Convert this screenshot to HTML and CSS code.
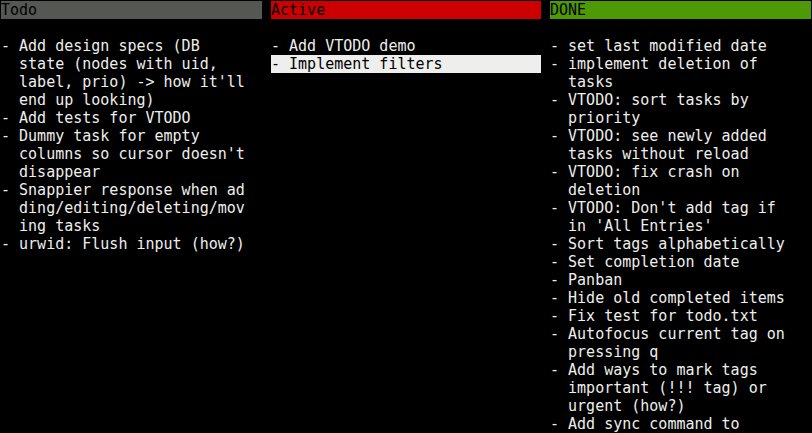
FILE: index.html
```html
<!DOCTYPE html>
<html>
<head>
<meta charset="utf-8">
<link rel="stylesheet" href="styles.css">
</head>
<body>
<div class="board">
  <section class="col">
    <div class="head head-todo">Todo</div>
    <div class="line"> </div>
    <div class="line">- Add design specs (DB</div>
    <div class="line">  state (nodes with uid,</div>
    <div class="line">  label, prio) -&gt; how it'll</div>
    <div class="line">  end up looking)</div>
    <div class="line">- Add tests for VTODO</div>
    <div class="line">- Dummy task for empty</div>
    <div class="line">  columns so cursor doesn't</div>
    <div class="line">  disappear</div>
    <div class="line">- Snappier response when ad</div>
    <div class="line">  ding/editing/deleting/mov</div>
    <div class="line">  ing tasks</div>
    <div class="line">- urwid: Flush input (how?)</div>
  </section>
  <div class="gap"></div>
  <section class="col">
    <div class="head head-active">Active</div>
    <div class="line"> </div>
    <div class="line">- Add VTODO demo</div>
    <div class="line focus">- Implement filters</div>
  </section>
  <div class="gap"></div>
  <section class="col">
    <div class="head head-done">DONE</div>
    <div class="line"> </div>
    <div class="line">- set last modified date</div>
    <div class="line">- implement deletion of</div>
    <div class="line">  tasks</div>
    <div class="line">- VTODO: sort tasks by</div>
    <div class="line">  priority</div>
    <div class="line">- VTODO: see newly added</div>
    <div class="line">  tasks without reload</div>
    <div class="line">- VTODO: fix crash on</div>
    <div class="line">  deletion</div>
    <div class="line">- VTODO: Don't add tag if</div>
    <div class="line">  in 'All Entries'</div>
    <div class="line">- Sort tags alphabetically</div>
    <div class="line">- Set completion date</div>
    <div class="line">- Panban</div>
    <div class="line">- Hide old completed items</div>
    <div class="line">- Fix test for todo.txt</div>
    <div class="line">- Autofocus current tag on</div>
    <div class="line">  pressing q</div>
    <div class="line">- Add ways to mark tags</div>
    <div class="line">  important (!!! tag) or</div>
    <div class="line">  urgent (how?)</div>
    <div class="line">- Add sync command to</div>
  </section>
</div>
</body>
</html>
```
FILE: styles.css
```css
html, body {
  margin: 0;
  padding: 0;
  background: #000;
  width: 812px;
  height: 433px;
  overflow: hidden;
}
body {
  font-family: "DejaVu Sans Mono", "Liberation Mono", monospace;
  font-size: 15px;
  line-height: 18px;
  color: #eeeeec;
}
.board {
  display: grid;
  grid-template-columns: 261px 9px 270px 9px 261px;
  padding: 1px 0 0 1px;
}
.col {
  display: flex;
  flex-direction: column;
}
.line, .head {
  white-space: pre;
  height: 18px;
  overflow: hidden;
}
.head {
  color: #000;
}
.head-todo { background: #555753; }
.head-active { background: #cc0000; }
.head-done { background: #4e9a06; }
.focus {
  background: #eeeeec;
  color: #000;
}
```
